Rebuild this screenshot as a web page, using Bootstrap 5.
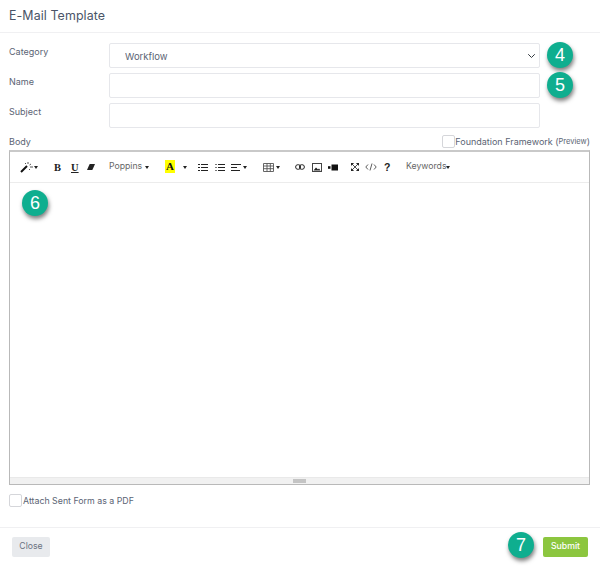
<!DOCTYPE html>
<html lang="en">
<head>
<meta charset="utf-8">
<title>E-Mail Template</title>
<link rel="stylesheet" href="https://cdn.jsdelivr.net/npm/bootstrap@5.3.0/dist/css/bootstrap.min.css">
<style>
html,body{height:566px;overflow:hidden;background:#fff}
body{font-family:Inter,"Liberation Sans",sans-serif;font-size:9px;color:#5b6474;position:relative}
.mdl-head{height:33px;border-bottom:1px solid #f0f0f2;padding-left:9px;color:#4a5568;font-size:12.4px;line-height:32px;letter-spacing:.1px;margin:0;font-weight:400}
.mdl-form{padding:10px 10px 0 9px}
.frm-row{margin-bottom:5px;position:relative}
.frm-lbl{width:100px;flex:none;padding-top:3px;line-height:12px}
.frm-ctl{width:431px;height:25px;border:1px solid #e6e7eb;border-radius:2px;font-size:9.5px;color:#5b6474;padding:3px 0 0 15px;background-color:#fff;box-shadow:none}
select.frm-ctl{background-position:right 3px center;background-size:9px 8px}
.body-head{height:15px;margin-top:7px;align-items:flex-start}
.chk{width:13px;height:13px;border:1px solid #d5d6da;border-radius:2px;background:#fff;flex:none;display:inline-block}
.prev{font-size:7.5px}
.edt{height:335px;border:1px solid #b9b9b9;border-top:2px solid #c9c9c9;width:581px;position:relative}
.tbar{height:31px;border-bottom:1px solid #ececec;position:relative;color:#222}
.tbar>*{position:absolute;top:0;height:30px;display:flex;align-items:center}
.tb-txt{color:#666;font-size:8.7px}
.car{width:0;height:0;border:2px solid transparent;border-top:3px solid #222;border-bottom:0;display:inline-block}
.b1{font:bold 10.5px "Liberation Serif",serif;color:#222}
.hl{background:#ff0;width:10px;height:13px;justify-content:center;font:bold 11px "Liberation Serif",serif;color:#111;line-height:13px;top:8px;display:flex}
.edt-body{height:294px}
.edt-foot{height:7px;background:#f1f1f1;border-top:1px solid #e9e9e9;display:flex;justify-content:center;align-items:center}
.grip{width:13px;height:4px;background:#c4c4c4;margin-left:0}
.after-row{margin-top:9px;height:13px;line-height:13px;font-size:8.8px}
.after-row span.txt{margin-left:1px}
.mdl-foot{position:absolute;left:0;right:0;top:527px;height:39px;border-top:1px solid #f0f0f2;padding:9px 12px 0 12px;display:flex;justify-content:space-between;align-items:flex-start}
.btn-x{background:#e8eaed;color:#6b7280;font-size:8.7px;border:0;border-radius:2px;width:38px;height:20px;padding:0}
.btn-y{background:#8cc63f;color:#fff;font-size:8.7px;border:0;border-radius:2px;width:45px;height:20px;padding:0;font-weight:500}
.step{position:absolute;width:26px;height:26px;border-radius:50%;background:#0fae8f;color:#fff;font:500 18px/26px "Liberation Sans",sans-serif;text-align:center;box-shadow:1px 3px 4px rgba(0,0,0,.5)}
.s4{left:547px;top:42px}.s5{left:547px;top:72px}.s6{left:22px;top:190px}.s7{left:508px;top:532px}
</style>
</head>
<body>
<h5 class="mdl-head">E-Mail Template</h5>
<form class="mdl-form">
  <div class="d-flex frm-row"><label class="frm-lbl">Category</label>
    <select class="form-select frm-ctl"><option>Workflow</option></select></div>
  <div class="d-flex frm-row"><label class="frm-lbl">Name</label><input class="form-control frm-ctl" type="text"></div>
  <div class="d-flex frm-row"><label class="frm-lbl">Subject</label><input class="form-control frm-ctl" type="text"></div>
  <div class="d-flex justify-content-between body-head">
    <span>Body</span>
    <span class="d-flex align-items-center"><span class="chk"></span>Foundation Framework (<span class="prev">Preview</span>)</span>
  </div>
  <div class="edt">
    <div class="tbar">
      <span style="left:10px"><svg width="14" height="12" viewBox="0 0 14 12"><path d="M1 11 7 5" stroke="#111" stroke-width="2"/><path d="M8 1v2M11 3l-1.500 1M13 6h-3M10 9 9 8M5 2l1 1" stroke="#555" stroke-width="1"/></svg></span>
      <span class="car" style="left:24px;top:14px;height:0"></span>
      <span class="b1" style="left:44px">B</span>
      <span class="b1" style="left:61px;text-decoration:underline">U</span>
      <span style="left:77px"><svg width="8" height="8" viewBox="0 0 9 9"><path d="M3 1h6L6 8H0z" fill="#222"/></svg></span>
      <span class="tb-txt" style="left:99px">Poppins</span>
      <span class="car" style="left:135px;top:14px;height:0"></span>
      <span class="hl" style="left:155px">A</span>
      <span class="car" style="left:173px;top:14px;height:0"></span>
      <span style="left:188px"><svg width="10" height="9" viewBox="0 0 10 9"><path d="M3 1.500h7M3 4.500h7M3 7.500h7M0 1.500h2M0 4.500h2M0 7.500h2" stroke="#222" stroke-width="1.200"/></svg></span>
      <span style="left:205px"><svg width="10" height="9" viewBox="0 0 10 9"><path d="M3 1.500h7M3 4.500h7M3 7.500h7" stroke="#222" stroke-width="1.200"/><path d="M0 1.500h2M0 4.500h2M0 7.500h2" stroke="#777" stroke-width="1.200"/></svg></span>
      <span style="left:221px"><svg width="10" height="9" viewBox="0 0 10 9"><path d="M0 1.500h10M0 4.500h6M0 7.500h9" stroke="#222" stroke-width="1.200"/></svg></span>
      <span class="car" style="left:233px;top:14px;height:0"></span>
      <span style="left:253px"><svg width="11" height="9" viewBox="0 0 11 9"><path d="M.5.500h10v8H.5zM.5 3h10M.5 5.700h10M4 .5v8M7.300.5v8" fill="none" stroke="#555" stroke-width=".9"/></svg></span>
      <span class="car" style="left:266px;top:14px;height:0"></span>
      <span style="left:285px"><svg width="10" height="6" viewBox="0 0 10 6"><rect x=".6" y=".7" width="5" height="4.600" rx="2.300" fill="none" stroke="#222" stroke-width="1"/><rect x="4.400" y=".7" width="5" height="4.600" rx="2.300" fill="none" stroke="#222" stroke-width="1"/></svg></span>
      <span style="left:302px"><svg width="10" height="9" viewBox="0 0 10 9"><rect x=".5" y=".5" width="9" height="8" fill="none" stroke="#444"/><path d="M1.500 7.500 4 4.500 6 6.500 7 5.500 8.500 7.500z" fill="#222"/></svg></span>
      <span style="left:318px"><svg width="10" height="7" viewBox="0 0 10 7"><rect x="3.500" y=".5" width="6.500" height="6" fill="#111"/><rect x="0" y="2.200" width="2.500" height="2.600" fill="#111"/></svg></span>
      <span style="left:341px"><svg width="8" height="8" viewBox="0 0 8 8"><path d="M0 0h2.500L0 2.500zM8 0v2.500L5.500 0zM0 8V5.500L2.500 8zM8 8H5.500L8 5.500zM1 1l6 6M7 1 1 7" fill="#222" stroke="#222" stroke-width=".8"/></svg></span>
      <span style="left:355px"><svg width="12" height="8" viewBox="0 0 12 8"><path d="M3 1.500.8 4 3 6.500M9 1.500 11.200 4 9 6.500M7 .5 5 7.500" fill="none" stroke="#333" stroke-width=".8"/></svg></span>
      <span style="left:374px;font:bold 10.500px 'Liberation Sans',sans-serif;color:#222">?</span>
      <span class="tb-txt" style="left:396px">Keywords</span>
      <span class="car" style="left:436px;top:14px;height:0"></span>
    </div>
    <div class="edt-body"></div>
    <div class="edt-foot"><span class="grip"></span></div>
  </div>
  <div class="d-flex align-items-center after-row"><span class="chk"></span><span class="txt">Attach Sent Form as a PDF</span></div>
</form>
<span class="step s4">4</span>
<span class="step s5">5</span>
<span class="step s6">6</span>
<div class="mdl-foot">
  <button type="button" class="btn btn-x">Close</button>
  <button type="button" class="btn btn-y">Submit</button>
</div>
<span class="step s7">7</span>
</body>
</html>
